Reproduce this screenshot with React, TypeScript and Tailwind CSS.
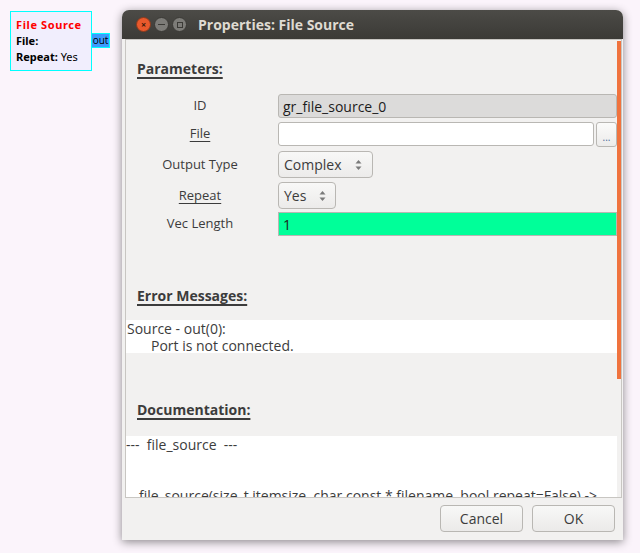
import React from 'react';

const ui = { fontFamily: '"Open Sans", "DejaVu Sans", sans-serif' };

function Spin() {
  return (
    <svg width="7" height="12" viewBox="0 0 7 12" className="shrink-0">
      <path d="M0.5 4.5 L3.5 1 L6.5 4.5 Z" fill="#7a7a7a" />
      <path d="M0.5 7.5 L3.5 11 L6.5 7.5 Z" fill="#7a7a7a" />
    </svg>
  );
}

function Heading({ children }: { children: React.ReactNode }) {
  return (
    <div className="pl-[11px] text-[14px] font-bold text-[#3c3c3c] leading-[18px]">
      <span className="underline decoration-2 underline-offset-[3px]">{children}</span>
    </div>
  );
}

function Row({ label, under, h, children }: { label: string; under?: boolean; h: string; children: React.ReactNode }) {
  return (
    <div className={`flex items-center ${h}`}>
      <div className="w-[148px] text-center text-[13px] text-[#3c3c3c]">
        <span className={under ? 'underline underline-offset-[3px]' : ''}>{label}</span>
      </div>
      <div className="flex-1 flex items-stretch h-full pl-[4px]">{children}</div>
    </div>
  );
}

export default function App() {
  return (
    <div className="relative w-[640px] h-[553px] bg-[#fbf4fb] overflow-hidden" style={ui}>
      {/* block on canvas */}
      <div className="absolute left-[10px] top-[11px] w-[82px] h-[60px] border border-[#00ffff] bg-[#f1eefd] px-[5px] pt-[5px] text-[11px] leading-[16px] text-black" style={{ fontFamily: '"Noto Sans", "DejaVu Sans", sans-serif' }}>
        <div className="font-bold text-[#ff0000] tracking-[0.6px]">File Source</div>
        <div className="font-bold">File:</div>
        <div><span className="font-bold">Repeat:</span> Yes</div>
      </div>
      <div className="absolute left-[91px] top-[33px] w-[19px] h-[15px] bg-[#3c9cff] border border-[#00ffff] text-[10px] leading-[13px] text-black flex items-center justify-center">out</div>

      {/* dialog window */}
      <div className="absolute left-[122px] top-[10px] w-[501px] h-[530px] rounded-t-[7px] bg-[#f2f1f0] flex flex-col shadow-[0_2px_10px_rgba(0,0,0,0.45)]">
        <div className="h-[29px] rounded-t-[7px] bg-gradient-to-b from-[#4c4b47] to-[#3b3a36] flex items-center pl-[14px]">
          <div className="flex items-center gap-[3px]">
            <div className="w-[15px] h-[15px] rounded-full bg-[#e9592c] border border-[#8a3a1d] flex items-center justify-center text-[9px] leading-none text-[#3a1a0a] font-bold">×</div>
            <div className="w-[15px] h-[15px] rounded-full bg-[#7d7c78] border border-[#3a3935] flex items-center justify-center">
              <div className="w-[7px] h-[1.5px] bg-[#3b3a36]" />
            </div>
            <div className="w-[15px] h-[15px] rounded-full bg-[#7d7c78] border border-[#3a3935] flex items-center justify-center">
              <div className="w-[6px] h-[6px] border border-[#3b3a36]" />
            </div>
          </div>
          <div className="ml-[11px] text-[14px] font-bold text-[#dfdbd2]">Properties: File Source</div>
        </div>

        <div className="flex-1 flex flex-col pl-[3px] pr-[1px]">
          <div className="h-[459px] border border-[#c8c6c2] relative overflow-hidden flex">
            <div className="flex-1 flex flex-col overflow-hidden pt-[20px]">
              <Heading>Parameters:</Heading>
              <div className="mt-[16px] flex flex-col">
                <Row label="ID" h="h-[24px]">
                  <div className="flex-1 rounded-[3px] border border-[#b9b7b3] bg-[#dcdbda] text-[14px] text-[#1c1c1c] px-[4px] flex items-center">gr_file_source_0</div>
                </Row>
                <div className="mt-[4px]">
                  <Row label="File" under h="h-[24px]">
                    <div className="flex-1 rounded-[3px] border border-[#b9b7b3] bg-white" />
                    <div className="ml-[2px] w-[21px] h-[25px] rounded-[3px] border border-[#b9b7b3] bg-gradient-to-b from-[#fbfbfa] to-[#ecebea] flex items-end justify-center pb-[4px] text-[10px] leading-none text-[#4a6a9a]">...</div>
                  </Row>
                </div>
                <div className="mt-[5px]">
                  <Row label="Output Type" h="h-[27px]">
                    <div className="w-[95px] rounded-[4px] border border-[#b9b7b3] bg-gradient-to-b from-[#f8f8f7] to-[#ecebea] flex items-center justify-between pl-[5px] pr-[10px] text-[14px] text-[#3c3c3c]">
                      <span>Complex</span>
                      <Spin />
                    </div>
                  </Row>
                </div>
                <div className="mt-[4px]">
                  <Row label="Repeat" under h="h-[27px]">
                    <div className="w-[58px] rounded-[4px] border border-[#b9b7b3] bg-gradient-to-b from-[#f8f8f7] to-[#ecebea] flex items-center justify-between pl-[5px] pr-[9px] text-[14px] text-[#3c3c3c]">
                      <span>Yes</span>
                      <Spin />
                    </div>
                  </Row>
                </div>
                <div className="mt-[3px]">
                  <Row label="Vec Length" h="h-[24px]">
                    <div className="flex-1 border border-[#b9b7b3] bg-[#00ff99] text-[14px] text-[#1c1c1c] px-[4px] flex items-center">1</div>
                  </Row>
                </div>
              </div>

              <div className="mt-[51px]">
                <Heading>Error Messages:</Heading>
              </div>
              <div className="mt-[15px] h-[33px] bg-white text-[14px] leading-[17px] text-[#3c3c3c] pl-[1px] mr-[-4px]">
                <div>Source - out(0):</div>
                <div className="pl-[24px]">Port is not connected.</div>
              </div>

              <div className="mt-[48px]">
                <Heading>Documentation:</Heading>
              </div>
              <div className="mt-[17px] flex-1 bg-white text-[14px] leading-[17px] text-[#3c3c3c] mr-[-4px] pt-[0px]">
                <div>---&nbsp;&nbsp;file_source&nbsp;&nbsp;---</div>
                <div className="mt-[34px] pl-[13px] whitespace-nowrap">file_source(size_t itemsize, char const * filename, bool repeat=False) -&gt;</div>
              </div>
            </div>
            <div className="w-[4px] flex flex-col">
              <div className="h-[338px] bg-[#f0733e] mt-[1px]" />
            </div>
          </div>

          <div className="flex-1 flex items-center justify-end gap-[9px] pr-[7px] pb-[2px]">
            <div className="w-[83px] h-[27px] rounded-[4px] border border-[#b9b7b3] bg-gradient-to-b from-[#f8f8f7] to-[#ebeae9] flex items-center justify-center text-[14px] text-[#3c3c3c]">Cancel</div>
            <div className="w-[83px] h-[27px] rounded-[4px] border border-[#b9b7b3] bg-gradient-to-b from-[#f8f8f7] to-[#ebeae9] flex items-center justify-center text-[14px] text-[#3c3c3c]">OK</div>
          </div>
        </div>
      </div>
    </div>
  );
}
